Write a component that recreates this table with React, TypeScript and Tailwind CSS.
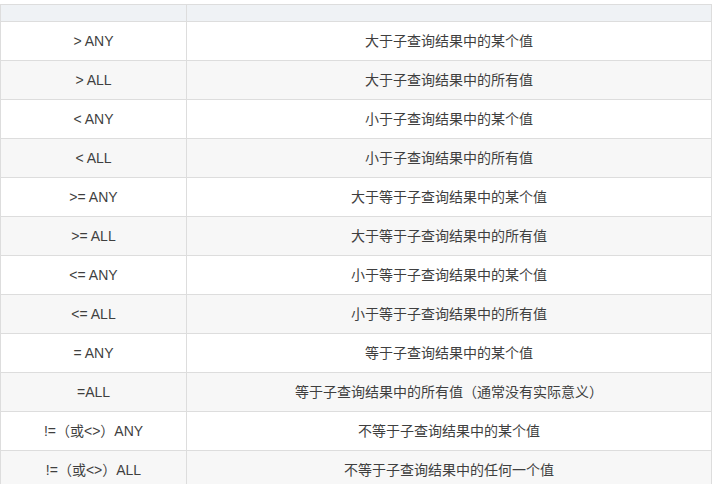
const rows: [string, string][] = [
  ["> ANY", "大于子查询结果中的某个值"],
  ["> ALL", "大于子查询结果中的所有值"],
  ["< ANY", "小于子查询结果中的某个值"],
  ["< ALL", "小于子查询结果中的所有值"],
  [">= ANY", "大于等于子查询结果中的某个值"],
  [">= ALL", "大于等于子查询结果中的所有值"],
  ["<= ANY", "小于等于子查询结果中的某个值"],
  ["<= ALL", "小于等于子查询结果中的所有值"],
  ["= ANY", "等于子查询结果中的某个值"],
  ["=ALL", "等于子查询结果中的所有值（通常没有实际意义）"],
  ["!=（或<>）ANY", "不等于子查询结果中的某个值"],
  ["!=（或<>）ALL", "不等于子查询结果中的任何一个值"],
];

const App = () => {
  return (
    <div
      className="h-[484px] overflow-hidden bg-white pt-[4px]"
      style={{ fontFamily: '"Liberation Sans", "Noto Sans CJK SC", sans-serif' }}
    >
      <table className="w-[712px] table-fixed border-collapse text-[14px] text-[#3f3f3f]">
        <colgroup>
          <col className="w-[186px]" />
          <col />
        </colgroup>
        <thead>
          <tr className="h-[17px] bg-[#eff2f5]">
            <th className="border border-[#ddd] p-0"></th>
            <th className="border border-[#ddd] p-0"></th>
          </tr>
        </thead>
        <tbody>
          {rows.map(([op, desc], i) => (
            <tr key={op} className={`h-[39px] ${i % 2 === 1 ? "bg-[#f7f7f7]" : "bg-white"}`}>
              <td className="border border-[#ddd] p-0 pt-[1px] text-center">{op}</td>
              <td className="border border-[#ddd] p-0 pt-[1px] text-center">{desc}</td>
            </tr>
          ))}
        </tbody>
      </table>
    </div>
  );
};

export default App;
